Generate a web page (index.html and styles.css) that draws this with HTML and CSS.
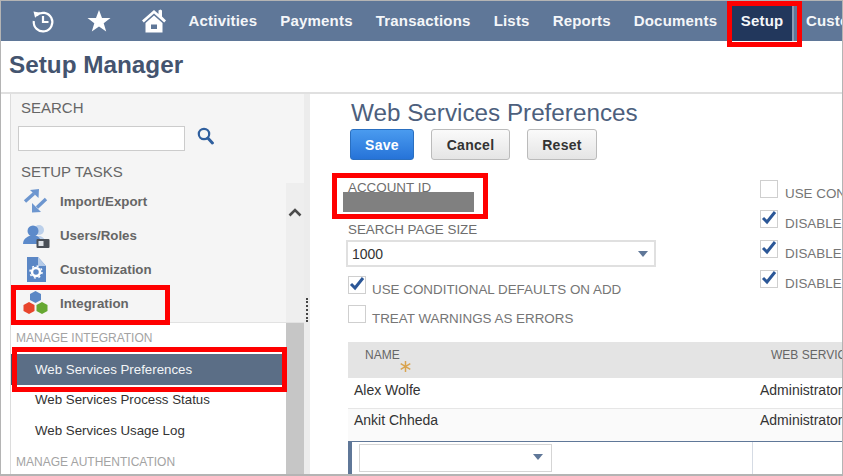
FILE: index.html
```html
<!DOCTYPE html>
<html lang="en">
<head>
    <meta charset="UTF-8">
    <title>Web Services Preferences</title>
    <link rel="stylesheet" href="styles.css">
</head>
<body>
<div class="frame">
    <nav class="topbar">
        <span class="nav-icon icon-history">
            <svg width="26" height="26" viewBox="0 0 26 26"><path d="M6.500 7.500A9.300 9.300 0 1 1 3.800 13" fill="none" stroke="#fff" stroke-width="2.200"/><path d="M3.500 3.500l7 1.200-5.400 5z" fill="#fff"/><path d="M13 8v6h5.500" fill="none" stroke="#fff" stroke-width="2.200"/></svg>
        </span>
        <span class="nav-icon icon-star">
            <svg width="24" height="24" viewBox="0 0 24 24"><polygon points="12,1 15,9 23.500,9 16.700,14.300 19.200,22.500 12,17.600 4.800,22.500 7.300,14.300 0.500,9 9,9" fill="#fff"/></svg>
        </span>
        <span class="nav-icon icon-home">
            <svg width="26" height="26" viewBox="0 0 26 26"><path d="M1 12.500L13 2l4.500 4V2.500l2-1 1.500 1V8.500l4 4-1.800 2L13 5.500 2.800 14.500z" fill="#fff"/><path d="M4.500 15L13 7.500l8.500 7.500v9.500h-17zM10 16.500v4.500h6v-4.500z" fill="#fff" fill-rule="evenodd"/></svg>
        </span>
        <a class="nav-item">Activities</a>
        <a class="nav-item">Payments</a>
        <a class="nav-item">Transactions</a>
        <a class="nav-item">Lists</a>
        <a class="nav-item">Reports</a>
        <a class="nav-item">Documents</a>
        <a class="nav-item active">Setup</a>
        <a class="nav-item">Customization</a>
    </nav>

    <h1 class="page-title">Setup Manager</h1>

    <div class="main">
        <aside class="sidebar">
            <div class="sidebar-panel">
                <div class="search-block">
                    <div class="panel-label">SEARCH</div>
                    <div class="search-row">
                        <input class="search-input" type="text">
                        <svg class="search-icon" width="17" height="18" viewBox="0 0 17 18"><circle cx="7" cy="7" r="5.200" fill="none" stroke="#2f5f9e" stroke-width="2.200"/><path d="M10.800 11l4.600 5" stroke="#2f5f9e" stroke-width="3" stroke-linecap="round"/></svg>
                    </div>
                    <div class="panel-label tasks-label">SETUP TASKS</div>
                </div>
                <div class="tasks">
                    <div class="task-list">
                        <div class="task">
                            <svg width="25" height="24" viewBox="0 0 25 24"><path d="M2 12.500L11 4.500M23 10L14 18.500" fill="none" stroke="#6d96cf" stroke-width="3.400"/><polygon points="7,1 16,0 15.500,9" fill="#6d96cf"/><polygon points="9,14 9,23.500 18,23" fill="#6d96cf"/></svg>
                            <span>Import/Export</span>
                        </div>
                        <div class="task">
                            <svg width="27" height="26" viewBox="0 0 27 26"><circle cx="16" cy="7" r="5" fill="#bcd0ea"/><path d="M10 20c0-5 3-7 6-7s6 2 6 7z" fill="#bcd0ea"/><circle cx="10" cy="8" r="5.500" fill="#5c8aca"/><path d="M0 21c0-5 4-7 6-8h8c2 1 4 3 4 8z" fill="#5c8aca"/><rect x="13.500" y="16" width="13" height="9" rx="1" fill="#4a4f57"/><rect x="15.500" y="18" width="5" height="5" fill="#dfe3e8"/></svg>
                            <span>Users/Roles</span>
                        </div>
                        <div class="task">
                            <svg width="24" height="25" viewBox="-3 0 24 25"><path d="M1 0h11l8 9v16H1z" fill="#5b87c5"/><path d="M12 0l8 9h-8z" fill="#b5cbe8"/><circle cx="10" cy="15" r="4" fill="none" stroke="#fff" stroke-width="2.500"/><circle cx="10" cy="15" r="6" fill="none" stroke="#fff" stroke-width="1.500" stroke-dasharray="2 2.700"/></svg>
                            <span>Customization</span>
                        </div>
                        <div class="task">
                            <svg width="25" height="23" viewBox="0 0 25 23"><polygon points="12.500,0 18,3 18,9 12.500,12 7,9 7,3" fill="#5b87c5"/><polygon points="6,11 11.500,14 11.500,20 6,23 .5,20 .5,14" fill="#e8452c"/><polygon points="19,11 24.500,14 24.500,20 19,23 13.500,20 13.500,14" fill="#66a832"/></svg>
                            <span>Integration</span>
                        </div>
                    </div>
                    <div class="task-scroll">
                        <svg width="14" height="9" viewBox="0 0 14 9"><path d="M1.500 7.500L7 2l5.500 5.500" fill="none" stroke="#4c4c4c" stroke-width="2.600"/></svg>
                    </div>
                </div>
                <div class="manage">
                    <div class="manage-list">
                        <div class="manage-label">MANAGE INTEGRATION</div>
                        <div class="manage-link selected">Web Services Preferences</div>
                        <div class="manage-link">Web Services Process Status</div>
                        <div class="manage-link">Web Services Usage Log</div>
                        <div class="manage-label">MANAGE AUTHENTICATION</div>
                    </div>
                    <div class="manage-scroll"></div>
                </div>
            </div>
            <div class="splitter"><span class="splitter-dots"></span></div>
        </aside>

        <section class="content">
            <h2 class="form-title">Web Services Preferences</h2>
            <div class="button-row">
                <button class="btn btn-save">Save</button>
                <button class="btn btn-cancel">Cancel</button>
                <button class="btn btn-reset">Reset</button>
            </div>

            <div class="form-columns">
                <div class="form-left">
                    <div class="field-label">ACCOUNT ID</div>
                    <div class="redacted"></div>
                    <div class="field-label size-label">SEARCH PAGE SIZE</div>
                    <div class="select-box page-size"><span>1000</span><i class="arrow"></i></div>
                    <div class="check-row first-check">
                        <span class="check-box"><svg width="18" height="16" viewBox="0 0 18 16"><path d="M3 8l4 4 8-10" fill="none" stroke="#2b5797" stroke-width="3"/></svg></span>
                        <span class="check-text">USE CONDITIONAL DEFAULTS ON ADD</span>
                    </div>
                    <div class="check-row">
                        <span class="check-box"></span>
                        <span class="check-text">TREAT WARNINGS AS ERRORS</span>
                    </div>
                </div>
                <div class="form-right">
                    <div class="check-row">
                        <span class="check-box"></span>
                        <span class="check-text">USE CONDITIONAL</span>
                    </div>
                    <div class="check-row">
                        <span class="check-box"><svg width="18" height="16" viewBox="0 0 18 16"><path d="M3 8l4 4 8-10" fill="none" stroke="#2b5797" stroke-width="3"/></svg></span>
                        <span class="check-text">DISABLE CLIENT</span>
                    </div>
                    <div class="check-row">
                        <span class="check-box"><svg width="18" height="16" viewBox="0 0 18 16"><path d="M3 8l4 4 8-10" fill="none" stroke="#2b5797" stroke-width="3"/></svg></span>
                        <span class="check-text">DISABLE SERVER</span>
                    </div>
                    <div class="check-row">
                        <span class="check-box"><svg width="18" height="16" viewBox="0 0 18 16"><path d="M3 8l4 4 8-10" fill="none" stroke="#2b5797" stroke-width="3"/></svg></span>
                        <span class="check-text">DISABLE SYSTEM</span>
                    </div>
                </div>
            </div>

            <div class="grid">
                <div class="grid-row grid-head">
                    <div class="head-name">NAME
                        <svg class="required" width="11" height="11" viewBox="0 0 11 11"><path d="M5.500 0v11M.7 2.700l9.600 5.600M.7 8.300l9.600-5.600" stroke="#d9a44f" stroke-width="1.500"/></svg>
                    </div>
                    <div class="head-role">WEB SERVICES ROLE</div>
                </div>
                <div class="grid-row grid-data">
                    <div class="cell-name">Alex Wolfe</div>
                    <div class="cell-role">Administrator</div>
                </div>
                <div class="grid-row grid-data alt">
                    <div class="cell-name">Ankit Chheda</div>
                    <div class="cell-role">Administrator</div>
                </div>
                <div class="grid-row grid-edit">
                    <div class="edit-name"><div class="select-box name-select"><i class="arrow"></i></div></div>
                    <div class="edit-role"></div>
                </div>
            </div>
        </section>
    </div>

    <!-- red callouts from the docs screenshot -->
    <div class="callout callout-setup"></div>
    <div class="callout callout-integration"></div>
    <div class="callout callout-prefs"></div>
    <div class="callout callout-account"></div>
</div>
</body>
</html>
```
FILE: styles.css
```css
html, body {
    margin: 0;
    padding: 0;
    overflow: hidden;
    background-color: #fff;
}

.frame {
    position: relative;
    width: 843px;
    height: 476px;
    box-sizing: border-box;
    border: 1px solid #b4b4b4;
    border-width: 1px 1px 2px 1px;
    overflow: hidden;
    font-family: "Liberation Sans", Arial, sans-serif;
    color: #666;
}

/* top navigation */
.topbar {
    display: flex;
    align-items: center;
    height: 40px;
    background-color: #5f7798;
    white-space: nowrap;
}

.nav-icon {
    display: flex;
    align-items: center;
    justify-content: center;
    flex: none;
}

.icon-history {
    width: 26px;
    margin-left: 29px;
}

.icon-star {
    width: 24px;
    margin-left: 31px;
}

.icon-home {
    width: 26px;
    margin-left: 30px;
    margin-right: 10px;
}

.nav-item {
    display: block;
    flex: none;
    height: 40px;
    line-height: 40px;
    padding: 0 11.5px;
    font-size: 15px;
    font-weight: bold;
    letter-spacing: 0.2px;
    color: #f4f6f9;
}

.nav-item.active {
    padding: 0 9px 0 11px;
    background-color: #22375c;
    border-right: 2px solid #8b9bb3;
    margin-left: 1px;
}

.page-title {
    margin: 0;
    height: 51px;
    padding: 10px 0 0 8px;
    box-sizing: border-box;
    font-size: 24.3px;
    line-height: 28px;
    font-weight: bold;
    color: #44546f;
}

/* main area */
.main {
    display: flex;
    height: 382px;
    border-top: 2px solid #e0e0e0;
}

.sidebar {
    display: flex;
    flex: none;
    width: 300px;
    margin-left: 9px;
    border-left: 1px solid #dcdcdc;
}

.sidebar-panel {
    display: flex;
    flex-direction: column;
    width: 293px;
    background-color: #f5f5f5;
}

.splitter {
    width: 6px;
    background-color: #ececec;
}

.splitter-dots {
    display: block;
    width: 0;
    height: 24px;
    margin: 204px 0 0 2px;
    border-left: 2px dotted #444;
}

.search-block {
    flex: none;
    height: 89px;
    padding: 5px 0 0 10px;
    box-sizing: border-box;
}

.panel-label {
    font-size: 15px;
    line-height: 17px;
    color: #666;
}

.search-row {
    display: flex;
    align-items: center;
    margin: 10px 0 0 -3px;
}

.search-input {
    width: 167px;
    height: 25px;
    box-sizing: border-box;
    border: 1px solid #ccc;
    background-color: #fff;
    padding: 0;
}

.search-icon {
    margin: -5px 0 0 12px;
}

.tasks-label {
    margin-top: 12px;
}

.tasks {
    display: flex;
    flex: none;
    height: 139px;
    border-bottom: 1px solid #e2e2e2;
}

.task-list {
    flex: 1;
    padding-top: 1px;
}

.task {
    position: relative;
    display: flex;
    align-items: center;
    height: 34px;
    padding-left: 49px;
    font-size: 13.3px;
    font-weight: bold;
    color: #666;
}

.task svg {
    position: absolute;
    left: 12px;
    top: 5px;
}

.task-scroll {
    width: 18px;
    background-color: #eee;
    text-align: center;
    padding-top: 20px;
    box-sizing: border-box;
}

.manage {
    display: flex;
    flex: 1;
    min-height: 0;
    overflow: hidden;
    background-color: #fff;
}

.manage-list {
    flex: 1;
}

.manage-scroll {
    width: 18px;
    background-color: #c6c6c6;
}

.manage-label {
    height: 31px;
    padding: 7px 0 0 5px;
    box-sizing: border-box;
    font-size: 12px;
    line-height: 16px;
    color: #a3a3a3;
}

.manage-link {
    height: 31px;
    line-height: 29px;
    padding-left: 24px;
    font-size: 13.3px;
    color: #333;
}

.manage-link.selected {
    line-height: 31px;
    margin-right: 4px;
    background-color: #5b6e86;
    border-left: 6px solid #44546a;
    padding-left: 18px;
    color: #f3f5f7;
}

/* form */
.content {
    flex: 1;
    min-width: 0;
    overflow: hidden;
    padding-left: 36px;
}

.form-title {
    margin: 0;
    padding: 5px 0 0 4px;
    font-size: 24.25px;
    line-height: 28px;
    height: 35px;
    box-sizing: border-box;
    font-weight: normal;
    color: #4d5f7d;
}

.button-row {
    display: flex;
    gap: 17px;
    padding-left: 3px;
}

.btn {
    height: 31px;
    padding: 0;
    border: 1px solid #bbb;
    border-radius: 3px;
    background: linear-gradient(#fafafa, #e5e5e5);
    font-family: inherit;
    font-size: 14px;
    font-weight: bold;
    letter-spacing: 0.3px;
    color: #333;
}

.btn-save {
    width: 64px;
    border-color: #2a6fc0;
    background: linear-gradient(#4a9bef, #2673d8);
    color: #fff;
}

.btn-cancel {
    width: 79px;
}

.btn-reset {
    width: 70px;
}

.form-columns {
    display: flex;
    height: 182px;
}

.form-left {
    flex: none;
    width: 413px;
    padding-top: 20px;
    box-sizing: border-box;
}

.form-right {
    flex: none;
    width: 200px;
    display: flex;
    flex-direction: column;
    gap: 12px;
    padding-top: 20px;
    white-space: nowrap;
}

.form-right .check-text {
    margin-left: 7px;
}

.field-label {
    height: 16px;
    padding-left: 1px;
    font-size: 13.4px;
    line-height: 16px;
    color: #6e6e6e;
}

.redacted {
    width: 131px;
    height: 20px;
    margin: -4px 0 0 -4px;
    background-color: #808080;
}

.size-label {
    margin-top: 10px;
}

.select-box {
    position: relative;
    box-sizing: border-box;
    border: 2px solid #e0e0e0;
    background-color: #fff;
    font-size: 14px;
    color: #333;
}

.page-size {
    width: 310px;
    height: 27px;
    margin: 2px 0 0 -1px;
    line-height: 24px;
    padding-left: 4px;
}

.arrow {
    position: absolute;
    right: 6px;
    top: 9px;
    width: 0;
    height: 0;
    border-left: 5.5px solid transparent;
    border-right: 5.5px solid transparent;
    border-top: 6px solid #5f7798;
}

.name-select .arrow {
    right: 8px;
}

.check-row {
    display: flex;
    align-items: flex-start;
    height: 18px;
    white-space: nowrap;
}

.form-left .check-row {
    margin-top: 11px;
    margin-left: 1px;
}

.form-left .first-check {
    margin-top: 9px;
}

.check-box {
    flex: none;
    width: 18px;
    height: 18px;
    box-sizing: border-box;
    border: 1px solid #cfcfcf;
    background-color: #fff;
}

.check-box svg {
    display: block;
    margin: -1px 0 0 -1px;
}

.check-text {
    margin: 6px 0 0 6px;
    font-size: 13.4px;
    line-height: 16px;
    color: #757575;
}

/* table */
.grid {
    margin-left: 1px;
    width: 496px;
}

.grid-row {
    display: grid;
    grid-template-columns: 405px 1fr;
    white-space: nowrap;
}

.grid-head {
    height: 36px;
    background-color: #e4e4e4;
    font-size: 12px;
    line-height: 14px;
    color: #666;
}

.head-name {
    position: relative;
    padding: 6px 0 0 17px;
}

.required {
    position: absolute;
    left: 52px;
    top: 19px;
}

.head-role {
    padding: 6px 0 0 18px;
}

.grid-data {
    height: 31px;
    border-bottom: 1px solid #e6e6e6;
    box-sizing: border-box;
    font-size: 14px;
    line-height: 24px;
    color: #333;
}

.grid-data.alt {
    height: 32px;
    line-height: 23px;
    background-color: #fafafa;
    border-bottom: none;
}

.cell-name {
    padding-left: 6px;
}

.cell-role {
    padding-left: 7px;
}

.grid-edit {
    grid-template-columns: 401px 1fr;
    height: 34px;
    box-sizing: border-box;
    border-top: 1px solid #5f7798;
    border-bottom: 1px solid #5f7798;
    border-left: 4px solid #5f7798;
}

.edit-name {
    padding: 2px 0 0 7px;
    border-right: 1px solid #d5dbe4;
}

.name-select {
    width: 193px;
    height: 28px;
    border-width: 1px;
    border-color: #d5d5d5;
}

/* red callouts sit on top of the screenshot */
.callout {
    position: absolute;
    box-sizing: border-box;
    border: 5px solid #f00;
}

.callout-setup {
    left: 726px;
    top: 0;
    width: 75px;
    height: 46px;
}

.callout-integration {
    left: 10px;
    top: 284px;
    width: 159px;
    height: 40px;
}

.callout-prefs {
    left: 11px;
    top: 346px;
    width: 275px;
    height: 45px;
}

.callout-account {
    left: 331px;
    top: 172px;
    width: 156px;
    height: 46px;
}
```
